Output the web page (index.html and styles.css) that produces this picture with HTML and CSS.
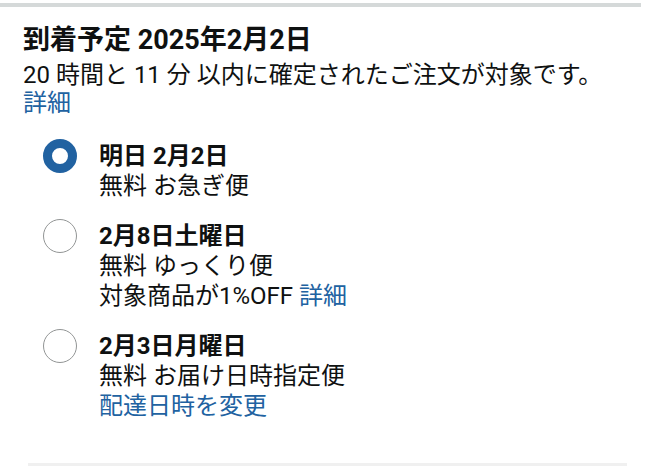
FILE: index.html
```html
<!DOCTYPE html>
<html lang="ja">
<head>
<meta charset="utf-8">
<link rel="stylesheet" href="styles.css">
</head>
<body>
<div class="topbar"></div>
<section class="delivery">
  <div class="header">
    <div class="title">到着予定 2025年2月2日</div>
    <div class="line">20 時間と 11 分 以内に確定されたご注文が対象です。</div>
    <div class="line"><span class="link">詳細</span></div>
  </div>
  <div class="options">
    <div class="option">
      <span class="radio checked"></span>
      <div class="text">
        <div class="line bold">明日 2月2日</div>
        <div class="line">無料 お急ぎ便</div>
      </div>
    </div>
    <div class="option">
      <span class="radio"></span>
      <div class="text">
        <div class="line bold">2月8日土曜日</div>
        <div class="line">無料 ゆっくり便</div>
        <div class="line">対象商品が1%OFF <span class="link">詳細</span></div>
      </div>
    </div>
    <div class="option">
      <span class="radio"></span>
      <div class="text">
        <div class="line bold">2月3日月曜日</div>
        <div class="line">無料 お届け日時指定便</div>
        <div class="line"><span class="link">配達日時を変更</span></div>
      </div>
    </div>
  </div>
</section>
<div class="divider"></div>
</body>
</html>
```
FILE: styles.css
```css
html, body {
  margin: 0;
  padding: 0;
  background: #ffffff;
}
body {
  font-family: Roboto, "Noto Sans CJK JP", sans-serif;
  color: #0f1111;
  font-size: 24px;
  width: 655px;
  height: 466px;
  overflow: hidden;
}
.topbar {
  margin-top: 3px;
  width: 641px;
  height: 4px;
  background: #d5d9d9;
}
.header {
  padding-left: 23px;
  padding-top: 16px;
}
.header .line {
  line-height: 28px;
}
.title {
  font-size: 27px;
  font-weight: 700;
  line-height: 34px;
  margin-bottom: 4px;
  white-space: nowrap;
}
.line {
  line-height: 30px;
  white-space: nowrap;
}
.bold {
  font-weight: 700;
}
.link {
  color: #2162a1;
}
.options {
  display: flex;
  flex-direction: column;
  gap: 20px;
  padding-left: 43px;
  margin-top: 24px;
}
.option {
  display: flex;
  align-items: flex-start;
  gap: 22px;
}
.radio {
  flex: none;
  box-sizing: border-box;
  width: 34px;
  height: 34px;
  border-radius: 50%;
  border: 1.5px solid #929595;
  margin-top: -2px;
  background: #fff;
}
.radio.checked {
  border: 9px solid #2162a1;
}
.divider {
  margin-top: 42px;
  margin-left: 28px;
  width: 599px;
  height: 3px;
  background: #f0f0f0;
}
```
